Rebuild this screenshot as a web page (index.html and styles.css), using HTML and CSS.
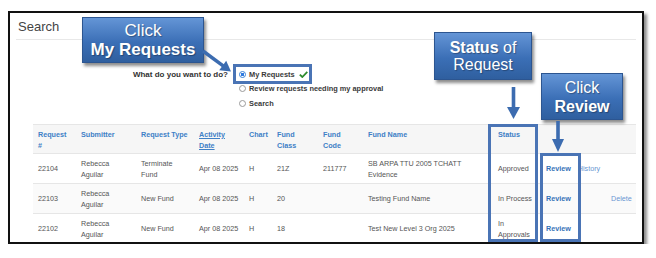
FILE: index.html
```html
<!DOCTYPE html>
<html lang="en">
<head>
    <meta charset="UTF-8">
    <title>Search - My Requests</title>
    <link rel="stylesheet" href="styles.css">
</head>
<body>
    <div class="panel">
        <h2 class="panel-title">Search</h2>

        <div class="question">
            <div class="question-label">What do you want to do?</div>
            <div class="choices">
                <div class="choice"><span class="radio checked"></span>My Requests
                    <svg class="check" width="9" height="7" viewBox="0 0 9 7"><path d="M0.8 3.6 L3.3 6 L8.3 0.8" fill="none" stroke="#2e8b2e" stroke-width="1.8"/></svg>
                </div>
                <div class="choice"><span class="radio"></span>Review requests needing my approval</div>
                <div class="choice"><span class="radio"></span>Search</div>
            </div>
        </div>

        <table class="requests">
            <colgroup>
                <col style="width:43px"><col style="width:60px"><col style="width:58px"><col style="width:50px">
                <col style="width:28px"><col style="width:46px"><col style="width:45px"><col style="width:130px">
                <col style="width:48px"><col style="width:65px"><col style="width:30px">
            </colgroup>
            <thead>
                <tr>
                    <th>Request #</th>
                    <th>Submitter</th>
                    <th>Request Type</th>
                    <th><u>Activity Date</u></th>
                    <th>Chart</th>
                    <th>Fund Class</th>
                    <th>Fund Code</th>
                    <th>Fund Name</th>
                    <th>Status</th>
                    <th></th>
                    <th></th>
                </tr>
            </thead>
            <tbody>
                <tr>
                    <td>22104</td>
                    <td>Rebecca Aguilar</td>
                    <td>Terminate Fund</td>
                    <td>Apr 08 2025</td>
                    <td>H</td>
                    <td>21Z</td>
                    <td>211777</td>
                    <td>SB ARPA TTU 2005 TCHATT Evidence</td>
                    <td>Approved</td>
                    <td class="actions"><a class="review">Review</a><a class="plain">History</a></td>
                    <td></td>
                </tr>
                <tr class="alt">
                    <td>22103</td>
                    <td>Rebecca Aguilar</td>
                    <td>New Fund</td>
                    <td>Apr 08 2025</td>
                    <td>H</td>
                    <td>20</td>
                    <td></td>
                    <td>Testing Fund Name</td>
                    <td>In Process</td>
                    <td class="actions"><a class="review">Review</a></td>
                    <td><a class="plain">Delete</a></td>
                </tr>
                <tr>
                    <td>22102</td>
                    <td>Rebecca Aguilar</td>
                    <td>New Fund</td>
                    <td>Apr 08 2025</td>
                    <td>H</td>
                    <td>18</td>
                    <td></td>
                    <td>Test New Level 3 Org 2025</td>
                    <td>In Approvals</td>
                    <td class="actions"><a class="review">Review</a></td>
                    <td></td>
                </tr>
            </tbody>
        </table>

        <!-- annotations on top of the screenshot -->
        <div class="pick pick-radio"></div>
        <div class="pick pick-status"></div>
        <div class="pick pick-review"></div>

        <div class="callout callout-my">Click<br><b>My Requests</b></div>
        <div class="callout callout-status"><b>Status</b> of<br>Request</div>
        <div class="callout callout-review">Click<br><b>Review</b></div>

        <svg class="arrow arrow-diag" width="34" height="26" viewBox="0 0 34 26">
            <line x1="3" y1="2" x2="23.5" y2="17.2" stroke="#3c6cb0" stroke-width="3.5"/>
            <polygon points="19.2,21.2 26.2,11.8 31,22.6" fill="#3c6cb0"/>
        </svg>
        <svg class="arrow arrow-status" width="13" height="32" viewBox="0 0 13 32">
            <rect x="4.7" y="0" width="3.6" height="21" fill="#3c6cb0"/>
            <polygon points="0,20 13,20 6.5,32" fill="#3c6cb0"/>
        </svg>
        <svg class="arrow arrow-review" width="12" height="31" viewBox="0 0 12 31">
            <rect x="4.2" y="0" width="3.6" height="19" fill="#3c6cb0"/>
            <polygon points="0,18 12,18 6,31" fill="#3c6cb0"/>
        </svg>
    </div>
</body>
</html>
```

FILE: styles.css
```css
body {
    margin: 0;
    background: #fff;
    font-family: "Liberation Sans", Arial, sans-serif;
}
.panel {
    position: relative;
    box-sizing: border-box;
    width: 636px;
    height: 233px;
    margin: 11px 0 0 8px;
    border: 2px solid #111;
    background: #fff;
    box-shadow: 3px 3px 3px rgba(0,0,0,0.45);
    overflow: hidden;
}
.panel-title {
    margin: 0 6px;
    padding: 2px 0 0 2px;
    height: 24px;
    line-height: 24px;
    font-size: 13px;
    font-weight: normal;
    color: #444;
    border-bottom: 1px solid #e8e8e8;
}
.question {
    display: flex;
    height: 84px;
    box-sizing: border-box;
    padding-top: 27px;
}
.question-label {
    width: 218px;
    text-align: right;
    font-size: 8px;
    font-weight: bold;
    line-height: 15px;
    color: #333;
}
.choices {
    margin-left: 11px;
}
.choice {
    display: flex;
    align-items: center;
    height: 14.5px;
    font-size: 7.4px;
    font-weight: bold;
    color: #3a3a3a;
}
.radio {
    box-sizing: border-box;
    width: 7px;
    height: 7px;
    margin-right: 3px;
    border: 1px solid #9a9a9a;
    border-radius: 50%;
    background: #fff;
}
.radio.checked {
    border-color: #3b82d6;
    background: radial-gradient(circle, #2f7ae0 45%, #fff 55%);
}
.check {
    margin-left: 4px;
}
.requests {
    table-layout: fixed;
    width: 603px;
    margin-left: 23px;
    border-collapse: collapse;
    font-size: 7.2px;
    line-height: 11px;
}
.requests th {
    height: 29px;
    padding: 3.5px 4px 0 5px;
    box-sizing: border-box;
    text-align: left;
    vertical-align: top;
    color: #4080c6;
    font-weight: bold;
    background: #f6f6f6;
    border-top: 1px solid #e6e6e6;
}
.requests th u {
    text-decoration-thickness: 1px;
}
.requests td {
    height: 30px;
    box-sizing: border-box;
    padding: 0 4px 0 5px;
    vertical-align: middle;
    color: #555;
    border-top: 1px solid #e6e6e6;
}
.requests tr.alt td {
    background: #fafafa;
}
.actions a {
    margin-right: 7px;
}
.review {
    color: #3672b8;
    font-weight: bold;
}
.plain {
    color: #6a96d2;
}
.pick {
    position: absolute;
    box-sizing: border-box;
    border: 3px solid #4a74b5;
}
.pick-radio {
    left: 223px;
    top: 51px;
    width: 79px;
    height: 20px;
}
.pick-status {
    left: 478px;
    top: 111px;
    width: 50px;
    height: 118px;
}
.pick-review {
    left: 530px;
    top: 140px;
    width: 41px;
    height: 89px;
}
.callout {
    position: absolute;
    box-sizing: border-box;
    border: 1px solid #2c5590;
    background: linear-gradient(#6495d6, #3b6fb6 55%, #2f5f9f);
    box-shadow: 2px 3px 3px rgba(0,0,0,0.45);
    color: #fff;
    text-align: center;
    font-size: 16px;
    line-height: 19px;
    text-shadow: 1px 1px 1px rgba(0,0,0,0.3);
}
.callout-my {
    left: 72px;
    top: 4px;
    width: 122px;
    height: 46px;
    padding-top: 3px;
    font-size: 17px;
}
.callout-status {
    left: 424px;
    top: 19px;
    width: 98px;
    height: 48px;
    padding-top: 6px;
    line-height: 17px;
}
.callout-review {
    left: 531px;
    top: 60px;
    width: 82px;
    height: 47px;
    padding-top: 4px;
}
.arrow {
    position: absolute;
}
.arrow-diag {
    left: 190px;
    top: 36px;
}
.arrow-status {
    left: 497px;
    top: 74px;
}
.arrow-review {
    left: 542px;
    top: 108px;
}
```
